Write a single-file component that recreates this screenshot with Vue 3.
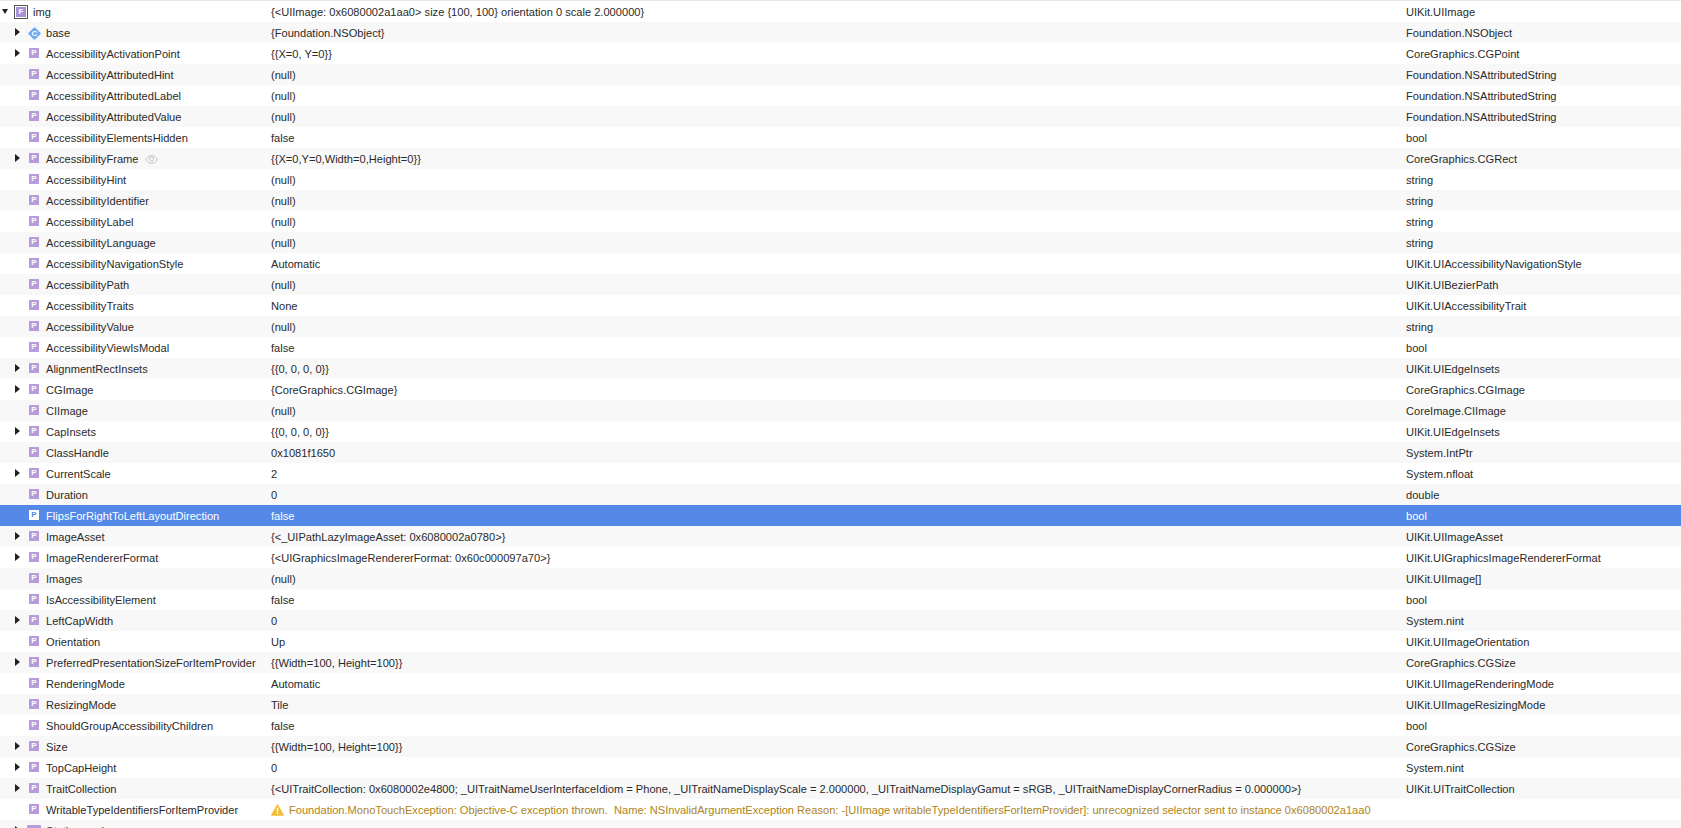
<template>
  <div class="tree">
    <div
      v-for="(row, i) in rows"
      :key="i"
      class="row"
      :class="{ alt: i % 2 === 1, selected: row.name === selectedName }"
    >
      <div class="name-cell" :class="{ root: i === 0 }">
        <span class="arrow" :class="{ open: i === 0, hidden: !row.arrow }"></span>
        <span v-if="i === 0" class="field-icon"><span>F</span></span>
        <span v-else-if="row.kind === 'c'" class="class-icon">
          <svg width="13" height="13" viewBox="0 0 13 13">
            <path d="M6.5 1.5 L11.5 6.5 L6.5 11.5 L1.5 6.5 Z" fill="#6eaaf0" stroke="#6eaaf0" stroke-linejoin="round" stroke-width="2.4" />
            <text x="6.5" y="9.4" text-anchor="middle" class="icon-letter">C</text>
          </svg>
        </span>
        <span v-else-if="row.folder" class="folder-icon"></span>
        <span v-else class="prop-icon">P</span>
        <span class="name">{{ row.name }}</span>
        <svg v-if="row.eye" class="eye" width="13" height="9" viewBox="0 0 13 9">
          <path d="M0.6 4.5 C2.6 1.4 4.6 0.6 6.5 0.6 C8.4 0.6 10.4 1.4 12.4 4.5 C10.4 7.6 8.4 8.4 6.5 8.4 C4.6 8.4 2.6 7.6 0.6 4.5 Z" fill="none" stroke="#c4c4c4" />
          <circle cx="6.5" cy="4.1" r="2.1" fill="none" stroke="#c4c4c4" />
        </svg>
      </div>
      <div class="value-cell" :class="{ error: row.error }">
        <svg v-if="row.error" class="warn" width="13" height="12" viewBox="0 0 13 12">
          <path d="M6.5 1 L12.2 11 L0.8 11 Z" fill="#f2c037" stroke="#f2c037" stroke-linejoin="round" stroke-width="1.4" />
          <rect x="5.8" y="3.6" width="1.4" height="4.2" fill="#fff" />
          <rect x="5.8" y="8.6" width="1.4" height="1.4" fill="#fff" />
        </svg>
        <span>{{ row.value }}</span>
      </div>
      <div class="type-cell">{{ row.type }}</div>
    </div>
  </div>
</template>

<script setup>
const selectedName = 'FlipsForRightToLeftLayoutDirection'

const rows = [
  { name: 'img', value: '{<UIImage: 0x6080002a1aa0> size {100, 100} orientation 0 scale 2.000000}', type: 'UIKit.UIImage', arrow: true },
  { name: 'base', value: '{Foundation.NSObject}', type: 'Foundation.NSObject', arrow: true, kind: 'c' },
  { name: 'AccessibilityActivationPoint', value: '{{X=0, Y=0}}', type: 'CoreGraphics.CGPoint', arrow: true },
  { name: 'AccessibilityAttributedHint', value: '(null)', type: 'Foundation.NSAttributedString' },
  { name: 'AccessibilityAttributedLabel', value: '(null)', type: 'Foundation.NSAttributedString' },
  { name: 'AccessibilityAttributedValue', value: '(null)', type: 'Foundation.NSAttributedString' },
  { name: 'AccessibilityElementsHidden', value: 'false', type: 'bool' },
  { name: 'AccessibilityFrame', value: '{{X=0,Y=0,Width=0,Height=0}}', type: 'CoreGraphics.CGRect', arrow: true, eye: true },
  { name: 'AccessibilityHint', value: '(null)', type: 'string' },
  { name: 'AccessibilityIdentifier', value: '(null)', type: 'string' },
  { name: 'AccessibilityLabel', value: '(null)', type: 'string' },
  { name: 'AccessibilityLanguage', value: '(null)', type: 'string' },
  { name: 'AccessibilityNavigationStyle', value: 'Automatic', type: 'UIKit.UIAccessibilityNavigationStyle' },
  { name: 'AccessibilityPath', value: '(null)', type: 'UIKit.UIBezierPath' },
  { name: 'AccessibilityTraits', value: 'None', type: 'UIKit.UIAccessibilityTrait' },
  { name: 'AccessibilityValue', value: '(null)', type: 'string' },
  { name: 'AccessibilityViewIsModal', value: 'false', type: 'bool' },
  { name: 'AlignmentRectInsets', value: '{{0, 0, 0, 0}}', type: 'UIKit.UIEdgeInsets', arrow: true },
  { name: 'CGImage', value: '{CoreGraphics.CGImage}', type: 'CoreGraphics.CGImage', arrow: true },
  { name: 'CIImage', value: '(null)', type: 'CoreImage.CIImage' },
  { name: 'CapInsets', value: '{{0, 0, 0, 0}}', type: 'UIKit.UIEdgeInsets', arrow: true },
  { name: 'ClassHandle', value: '0x1081f1650', type: 'System.IntPtr' },
  { name: 'CurrentScale', value: '2', type: 'System.nfloat', arrow: true },
  { name: 'Duration', value: '0', type: 'double' },
  { name: 'FlipsForRightToLeftLayoutDirection', value: 'false', type: 'bool' },
  { name: 'ImageAsset', value: '{<_UIPathLazyImageAsset: 0x6080002a0780>}', type: 'UIKit.UIImageAsset', arrow: true },
  { name: 'ImageRendererFormat', value: '{<UIGraphicsImageRendererFormat: 0x60c000097a70>}', type: 'UIKit.UIGraphicsImageRendererFormat', arrow: true },
  { name: 'Images', value: '(null)', type: 'UIKit.UIImage[]' },
  { name: 'IsAccessibilityElement', value: 'false', type: 'bool' },
  { name: 'LeftCapWidth', value: '0', type: 'System.nint', arrow: true },
  { name: 'Orientation', value: 'Up', type: 'UIKit.UIImageOrientation' },
  { name: 'PreferredPresentationSizeForItemProvider', value: '{{Width=100, Height=100}}', type: 'CoreGraphics.CGSize', arrow: true },
  { name: 'RenderingMode', value: 'Automatic', type: 'UIKit.UIImageRenderingMode' },
  { name: 'ResizingMode', value: 'Tile', type: 'UIKit.UIImageResizingMode' },
  { name: 'ShouldGroupAccessibilityChildren', value: 'false', type: 'bool' },
  { name: 'Size', value: '{{Width=100, Height=100}}', type: 'CoreGraphics.CGSize', arrow: true },
  { name: 'TopCapHeight', value: '0', type: 'System.nint', arrow: true },
  { name: 'TraitCollection', value: '{<UITraitCollection: 0x6080002e4800; _UITraitNameUserInterfaceIdiom = Phone, _UITraitNameDisplayScale = 2.000000, _UITraitNameDisplayGamut = sRGB, _UITraitNameDisplayCornerRadius = 0.000000>}', type: 'UIKit.UITraitCollection', arrow: true },
  { name: 'WritableTypeIdentifiersForItemProvider', value: 'Foundation.MonoTouchException: Objective-C exception thrown.  Name: NSInvalidArgumentException Reason: -[UIImage writableTypeIdentifiersForItemProvider]: unrecognized selector sent to instance 0x6080002a1aa0', type: '', error: true },
  { name: 'Static members', value: '', type: '', arrow: true, folder: true }
]
</script>

<style>
html,
body {
  margin: 0;
  background: #fff;
  overflow: hidden;
}
</style>

<style scoped>
.tree {
  width: 1681px;
  height: 828px;
  overflow: hidden;
  border-top: 1px solid #e6e6e6;
  box-sizing: border-box;
  font-family: "Liberation Sans", Arial, sans-serif;
  font-size: 11.1px;
  color: #2a2a2a;
}

.row {
  display: grid;
  grid-template-columns: 271px 1135px 275px;
  box-sizing: border-box;
  height: 21px;
  padding-top: 1px;
  line-height: 20px;
  background: #fff;
  white-space: pre;
}

.row.alt {
  background: #f8f8f8;
}

.row.selected {
  background: #5589e8;
  color: #fff;
}

.name-cell {
  display: flex;
  align-items: center;
  padding-left: 15px;
  min-width: 0;
}

.name-cell.root {
  padding-left: 2px;
}

.arrow {
  width: 0;
  height: 0;
  flex: none;
  margin-right: 9px;
  margin-bottom: 2px;
  border-left: 5px solid #222;
  border-top: 4px solid transparent;
  border-bottom: 4px solid transparent;
}

.arrow.hidden {
  visibility: hidden;
}

.arrow.open {
  margin-right: 6px;
  margin-bottom: 1px;
  border-left: 3.5px solid transparent;
  border-right: 3.5px solid transparent;
  border-top: 5px solid #222;
  border-bottom: 0;
}

.prop-icon {
  flex: none;
  width: 10px;
  height: 10px;
  margin-right: 7px;
  margin-bottom: 2px;
  background: #b79cdc;
  color: #fff;
  font-size: 8px;
  font-weight: bold;
  line-height: 10px;
  text-align: center;
}

.selected .prop-icon {
  background: #fff;
  color: #5589e8;
}

.field-icon {
  flex: none;
  width: 14px;
  height: 14px;
  margin-right: 5px;
  box-sizing: border-box;
  border: 1px solid #555;
  padding: 1px;
}

.field-icon span {
  display: block;
  width: 10px;
  height: 10px;
  background: #a98fd8;
  color: #fff;
  font-size: 8px;
  font-weight: bold;
  line-height: 10px;
  text-align: center;
}

.class-icon {
  flex: none;
  width: 13px;
  height: 13px;
  margin-left: -1px;
  margin-right: 5px;
}

.class-icon svg {
  display: block;
}

.icon-letter {
  fill: #fff;
  font-size: 8px;
  font-weight: bold;
}

.folder-icon {
  flex: none;
  width: 14px;
  height: 12px;
  margin-left: -2px;
  margin-right: 5px;
  background: #b79cdc;
  border-radius: 1px;
}

.eye {
  flex: none;
  margin-left: 7px;
}

.value-cell {
  display: flex;
  align-items: center;
  min-width: 0;
}

.value-cell.error {
  color: #ad8420;
}

.warn {
  flex: none;
  margin-right: 5px;
  margin-bottom: 1px;
}

.type-cell {
  min-width: 0;
}
</style>
